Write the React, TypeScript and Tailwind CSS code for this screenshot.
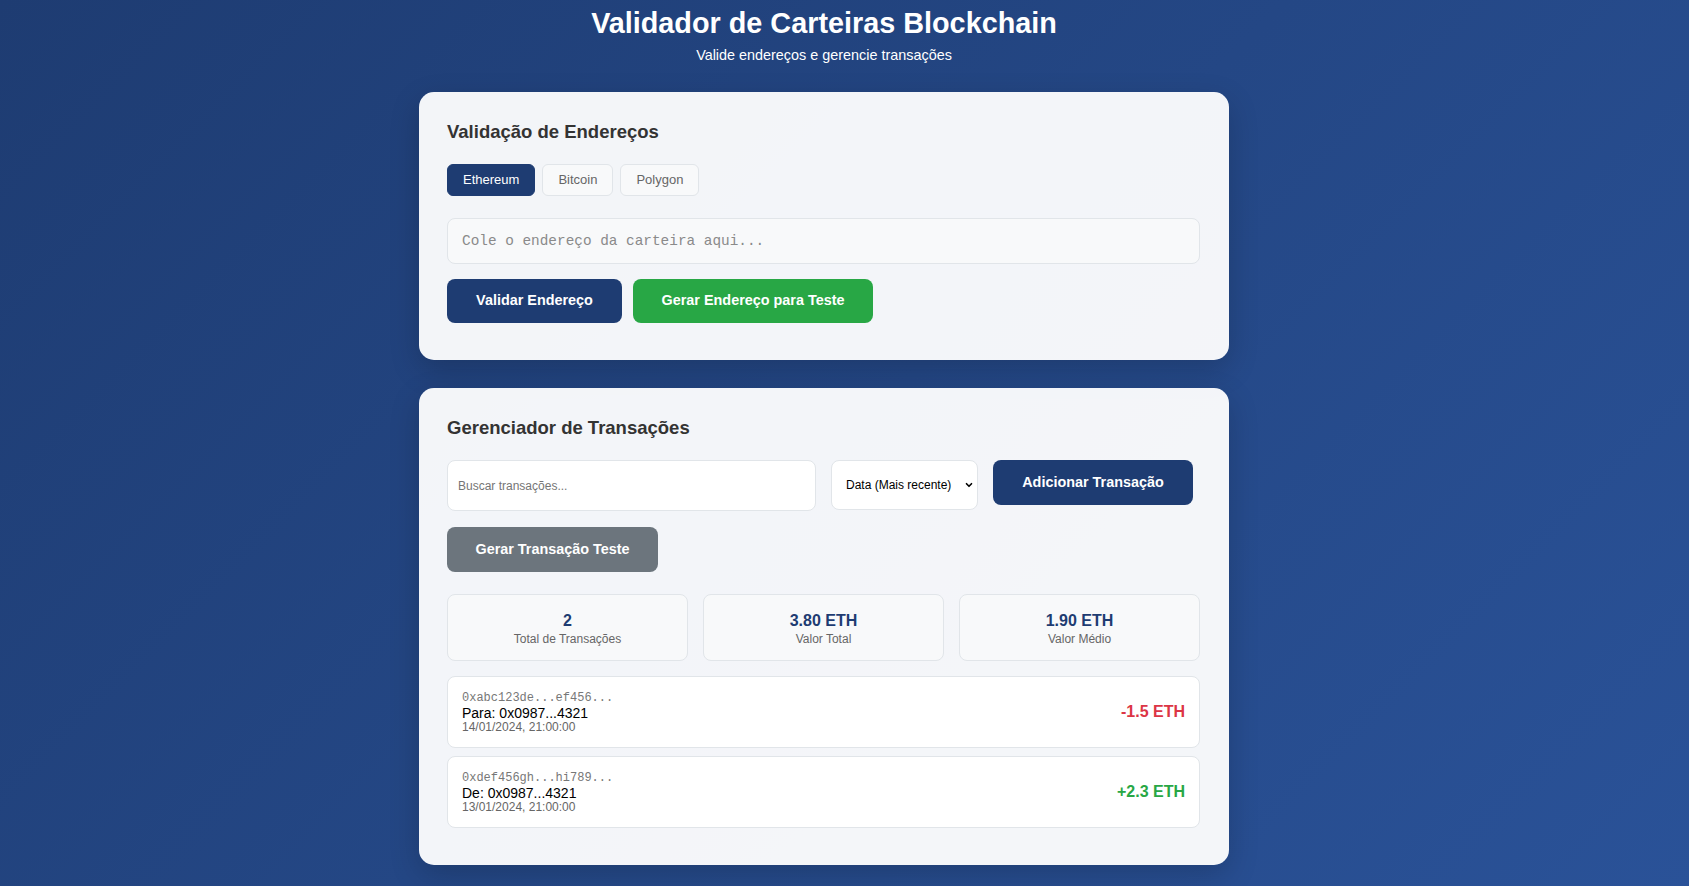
import { useState } from 'react';
import { ChevronDown } from 'lucide-react';

const transactions = [
  { hash: '0xabc123de...ef456...', label: 'Para: 0x0987...4321', date: '14/01/2024, 21:00:00', amount: '-1.5 ETH', out: true },
  { hash: '0xdef456gh...hi789...', label: 'De: 0x0987...4321', date: '13/01/2024, 21:00:00', amount: '+2.3 ETH', out: false },
];

const stats = [
  { value: '2', label: 'Total de Transações' },
  { value: '3.80 ETH', label: 'Valor Total' },
  { value: '1.90 ETH', label: 'Valor Médio' },
];

const networks = ['Ethereum', 'Bitcoin', 'Polygon'];

const App = () => {
  const [network, setNetwork] = useState('Ethereum');
  const [address, setAddress] = useState('');
  const [search, setSearch] = useState('');

  return (
    <div
      className="min-h-screen bg-[linear-gradient(135deg,#1e3c72_0%,#2a5298_100%)] pr-[41px] pb-[22px] flex justify-center"
      style={{ fontFamily: '"Liberation Sans", Arial, sans-serif' }}
    >
      <div className="w-[810px]">
        {/* Header */}
        <header className="pt-[7px] text-center text-white">
          <h1 className="text-[28.8px] leading-[33px] font-bold">Validador de Carteiras Blockchain</h1>
          <p className="mt-[7px] text-[14.4px] leading-[17px] text-white">Valide endereços e gerencie transações</p>
        </header>

        {/* Address validation */}
        <section className="mt-[28px] rounded-[15px] bg-white/95 pl-[28px] pr-[29px] pt-[29px] pb-[37px] shadow-[0_10px_30px_rgba(0,0,0,0.18)]">
          <h2 className="text-[18.5px] leading-[21px] font-bold text-[#333]">Validação de Endereços</h2>

          <div className="mt-[22px] flex gap-[7px]">
            {networks.map((n) => (
              <button
                key={n}
                onClick={() => setNetwork(n)}
                className={
                  n === network
                    ? 'h-[32px] px-[15px] rounded-[6px] border border-[#1e3c72] bg-[#1e3c72] text-white text-[13px]'
                    : 'h-[32px] px-[15px] rounded-[6px] border border-[#e1e5e9] bg-[#f8f9fa] text-[#666] text-[13px]'
                }
              >
                {n}
              </button>
            ))}
          </div>

          <input
            value={address}
            onChange={(e) => setAddress(e.target.value)}
            placeholder="Cole o endereço da carteira aqui..."
            className="mt-[22px] block w-full h-[46px] px-[14px] rounded-[8px] border border-[#e1e5e9] bg-[#f8f9fa] text-[14.4px] text-[#333] placeholder:text-[#8a8a8a] outline-none"
            style={{ fontFamily: '"Liberation Mono", "Courier New", monospace' }}
          />

          <div className="mt-[15px] flex gap-[11px]">
            <button className="h-[44px] w-[175px] rounded-[8px] bg-[#1e3c72] text-white text-[14.4px] font-bold">
              Validar Endereço
            </button>
            <button className="h-[44px] w-[240px] rounded-[8px] bg-[#28a745] text-white text-[14.4px] font-bold">
              Gerar Endereço para Teste
            </button>
          </div>
        </section>

        {/* Transaction manager */}
        <section className="mt-[28px] rounded-[15px] bg-white/95 pl-[28px] pr-[29px] pt-[29px] pb-[37px] shadow-[0_10px_30px_rgba(0,0,0,0.18)]">
          <h2 className="text-[18.5px] leading-[21px] font-bold text-[#333]">Gerenciador de Transações</h2>

          <div className="mt-[22px] flex items-start gap-[15px]">
            <input
              value={search}
              onChange={(e) => setSearch(e.target.value)}
              placeholder="Buscar transações..."
              className="h-[51px] w-[369px] px-[10px] rounded-[8px] border border-[#e1e5e9] bg-white text-[12px] text-[#333] placeholder:text-[#757575] outline-none"
            />
            <div className="relative h-[50px] w-[147px]">
              <select className="h-full w-full appearance-none pl-[14px] pr-[24px] rounded-[8px] border border-[#e1e5e9] bg-white text-[12px] text-black outline-none">
                <option>Data (Mais recente)</option>
                <option>Data (Mais antiga)</option>
                <option>Valor (Maior)</option>
                <option>Valor (Menor)</option>
              </select>
              <ChevronDown className="pointer-events-none absolute right-[4px] top-[20px] w-[10px] h-[10px] text-black" strokeWidth={4} />
            </div>
            <button className="h-[45px] w-[200px] rounded-[8px] bg-[#1e3c72] text-white text-[14.4px] font-bold">
              Adicionar Transação
            </button>
          </div>

          <button className="mt-[16px] h-[45px] w-[211px] rounded-[8px] bg-[#6c757d] text-white text-[14.4px] font-bold">
            Gerar Transação Teste
          </button>

          <div className="mt-[22px] grid grid-cols-3 gap-[15px]">
            {stats.map((s) => (
              <div
                key={s.label}
                className="h-[67px] pt-[17px] rounded-[8px] border border-[#e1e5e9] bg-[#f8f9fa] text-center"
              >
                <div className="text-[16px] leading-[18px] font-bold text-[#1e3c72]">{s.value}</div>
                <div className="mt-[2px] text-[12px] leading-[14px] text-[#666]">{s.label}</div>
              </div>
            ))}
          </div>

          <div className="mt-[15px] flex flex-col gap-[8px]">
            {transactions.map((t) => (
              <div
                key={t.hash}
                className="h-[72px] px-[14px] pt-[14px] rounded-[8px] border border-[#e1e5e9] bg-white flex justify-between"
              >
                <div>
                  <div
                    className="text-[12px] leading-[14px] text-[#777]"
                    style={{ fontFamily: '"Liberation Mono", "Courier New", monospace' }}
                  >
                    {t.hash}
                  </div>
                  <div className="text-[14px] leading-[16px] text-black">{t.label}</div>
                  <div className="text-[12px] leading-[12px] text-[#666]">{t.date}</div>
                </div>
                <div
                  className={
                    t.out
                      ? 'self-center -mt-[14px] text-[16px] font-bold text-[#dc3545]'
                      : 'self-center -mt-[14px] text-[16px] font-bold text-[#28a745]'
                  }
                >
                  {t.amount}
                </div>
              </div>
            ))}
          </div>
        </section>
      </div>
    </div>
  );
};

export default App;
